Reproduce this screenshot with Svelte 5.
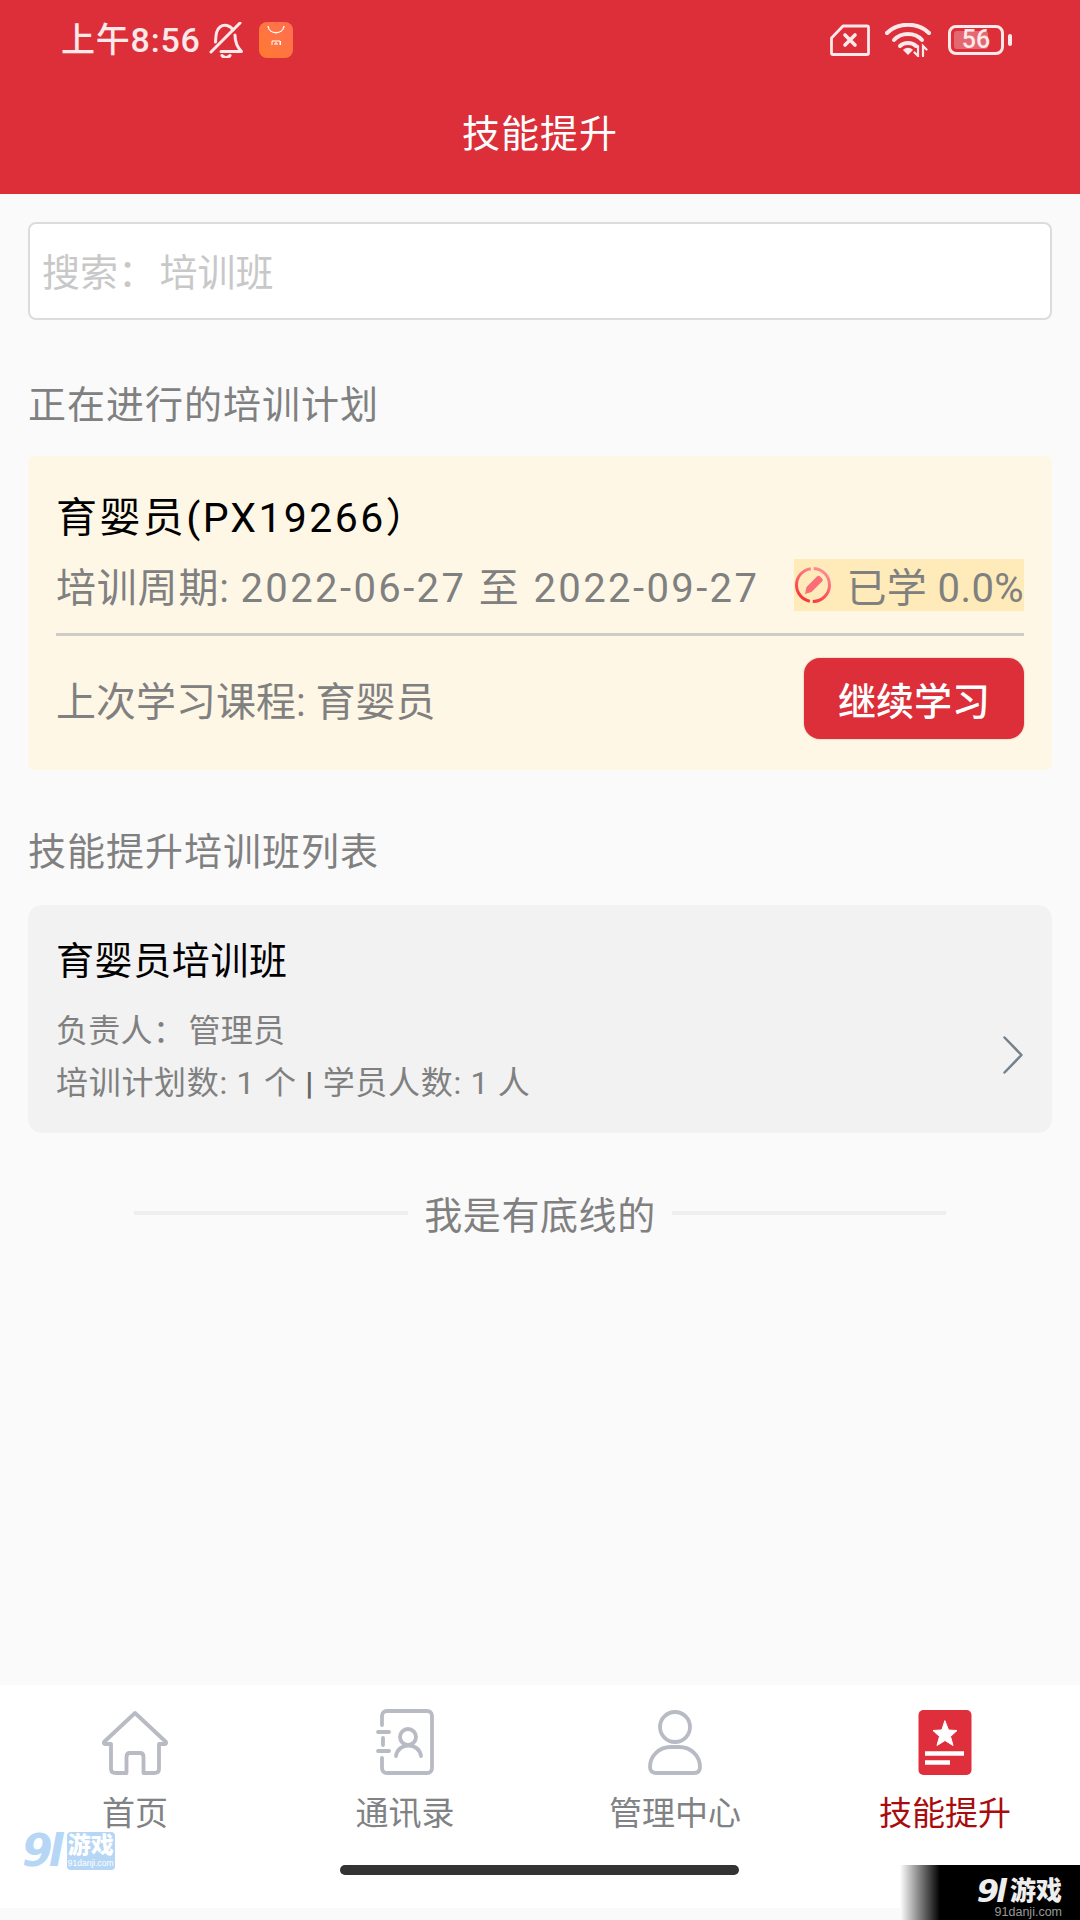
<script lang="ts">
  const tabs = [
    { label: '首页', icon: 'home' },
    { label: '通讯录', icon: 'book' },
    { label: '管理中心', icon: 'user' },
    { label: '技能提升', icon: 'skill', active: true },
  ];
</script>

<div class="page">
  <header class="header">
    <div class="status">
      <div class="status-left">
        <span class="clock">上午8:56</span>
        <svg class="bell" viewBox="0 0 36 36" fill="none" stroke="#fde8ea" stroke-width="3" stroke-linecap="round" stroke-linejoin="round">
          <path d="M3 30 L32 1" />
          <path d="M25 8 C22 3 16 2 12 5 C8 8 8 13 7.500 20" />
          <path d="M27 13 C27 19 29 25 33.500 29.500 L13 29.500" />
          <path d="M14 33.500 C16 36 20 36 22 33.500" />
        </svg>
        <svg class="mi" viewBox="0 0 34 36">
          <defs>
            <linearGradient id="mi-grad" x1="0" y1="1" x2="1" y2="0">
              <stop offset="0" stop-color="#ff7a30" />
              <stop offset="1" stop-color="#ff6f52" />
            </linearGradient>
          </defs>
          <rect width="34" height="36" rx="8" fill="url(#mi-grad)" />
          <path d="M9 4 C10 13 24 13 25 4" fill="none" stroke="#fff" stroke-width="1.400" />
          <path d="M13 23 V19 H21 V23 M16 23 V21 H18 V23 M21.500 19 V23" fill="none" stroke="#fff" stroke-width="1" />
        </svg>
      </div>
      <div class="status-right">
        <svg class="sim" viewBox="0 0 40 32" fill="none" stroke="#fde8ea" stroke-width="2.800" stroke-linejoin="round" stroke-linecap="round">
          <path d="M13 2 H37 A1.500 1.500 0 0 1 38.500 3.500 V29 A1.500 1.500 0 0 1 37 30.500 H3 A1.500 1.500 0 0 1 1.500 29 V14 Z" />
          <path d="M15 11 L25 21 M25 11 L15 21" stroke-width="3.600" />
        </svg>
        <svg class="wifi" viewBox="0 0 46 34" fill="none" stroke="#fde8ea" stroke-linecap="round">
          <path d="M2 10 C13 -1 33 -1 44 10" stroke-width="4" />
          <path d="M9 17 C16 9 30 9 37 17" stroke-width="4" />
          <path d="M15 23 C19 19 27 19 31 23" stroke-width="4" />
          <path d="M18 27 L23 32 L28 27 C25 24 21 24 18 27 Z" fill="#fde8ea" stroke="none" />
          <path d="M33 23 V33 L29.500 29.500 M38 33 V23 L41.500 26.500" stroke-width="2.200" />
        </svg>
        <div class="battery">
          <div class="battery-body">
            <span class="battery-fill"></span>
            <span class="battery-num">56</span>
          </div>
          <span class="battery-tip"></span>
        </div>
      </div>
    </div>
    <h1 class="title">技能提升</h1>
  </header>

  <main class="main">
    <div class="search">搜索： 培训班</div>

    <h2 class="section section-plan">正在进行的培训计划</h2>
    <section class="plan">
      <div class="plan-name">育婴员(PX19266）</div>
      <div class="plan-row">
        <span class="period"><span class="period-label">培训周期:{' '}</span>2022-06-27 至 2022-09-27</span>
        <span class="learned">
          <svg class="pen" viewBox="0 0 38 38" fill="none">
            <defs>
              <linearGradient id="pen-grad" x1="0.800" y1="0" x2="0.300" y2="1">
                <stop offset="0" stop-color="#ff8f9c" />
                <stop offset="1" stop-color="#f8333c" />
              </linearGradient>
            </defs>
            <circle cx="19" cy="19" r="16.500" stroke="url(#pen-grad)" stroke-width="3" stroke-dasharray="26 3 46 3" />
            <path d="M11 28 L12.500 21 L23 10.500 C24 9.500 25 9.500 26 10.500 L28 12.500 C29 13.500 29 14.500 28 15.500 L17.500 26 Z" fill="#fb6d78" />
          </svg>
          <span>已学 0.0%</span>
        </span>
      </div>
      <div class="plan-foot">
        <span>上次学习课程: 育婴员</span>
        <button class="continue" type="button">继续学习</button>
      </div>
    </section>

    <h2 class="section">技能提升培训班列表</h2>
    <section class="course">
      <div class="course-text">
        <div class="course-name">育婴员培训班</div>
        <div class="course-line first">负责人： 管理员</div>
        <div class="course-line stats">培训计划数: 1 个 <b>|</b> 学员人数: 1 人</div>
      </div>
      <svg class="chevron" viewBox="0 0 22 38" fill="none" stroke="#74828c" stroke-width="2.500" stroke-linecap="round" stroke-linejoin="round">
        <path d="M2.500 1.500 L19.500 19 L2.500 36.500" />
      </svg>
    </section>

    <div class="bottom-line">
      <span class="rule"></span>
      <span>我是有底线的</span>
      <span class="rule"></span>
    </div>
  </main>

  <nav class="tabbar">
    {#each tabs as tab (tab.label)}
      <div class="tab" class:active={tab.active}>
        <svg class="tab-icon" viewBox="0 0 68 68" fill="none" stroke="#b8bac4" stroke-width="3.800" stroke-linecap="round" stroke-linejoin="round">
          {#if tab.icon === 'home'}
            <path d="M34 4 L65 33 C65.500 34 65 35 64 35 H58 V60 C58 63 56 64 53 64 H42.500 V48 C42.500 45 41 44 39 44 H29 C27 44 25.500 45 25.500 48 V64 H15 C12 64 10 63 10 60 V35 H4 C3 35 2.500 34 3 33 Z" />
          {:else if tab.icon === 'book'}
            <path d="M11 16 V7 C11 4 13 2 16 2 H56 C59 2 61 4 61 7 V59 C61 62 59 64 56 64 H16 C13 64 11 62 11 59 V49" />
            <path d="M7 23 H18 M7 42 H18 M12 29 V36" />
            <circle cx="37" cy="28" r="8" />
            <path d="M25 47 C27 33 48 33 50 47" />
          {:else if tab.icon === 'user'}
            <circle cx="34" cy="18" r="15" />
            <path d="M9 58 C9 47 18 38 30 38 H38 C50 38 59 47 59 58 C59 62 57 64 53 64 H15 C11 64 9 62 9 58 Z" />
          {:else}
            <rect x="7.500" y="1" width="53" height="65" rx="5" fill="#e02f3c" stroke="none" />
            <path d="M34 12 L37.500 21 L46 21.500 L39.500 27.500 L42 36.500 L34 31.500 L26 36.500 L28.500 27.500 L22 21.500 L30.500 21 Z" fill="#fff" stroke="#fff" stroke-width="1" />
            <path d="M14 44.500 H53 M14 53.500 H39" stroke="#fff" stroke-width="4.500" stroke-linecap="butt" />
          {/if}
        </svg>
        <span>{tab.label}</span>
      </div>
    {/each}
  </nav>

  <div class="home-bar"></div>

  <div class="mark-left">
    <b class="mark-num">9l</b>
    <div class="mark-text">
      <b>游戏</b>
      <small>91danji.com</small>
    </div>
  </div>

  <div class="mark-right">
    <div class="mark-row">
      <b class="mark-num">9l</b>
      <b class="mark-name">游戏</b>
    </div>
    <small>91danji.com</small>
  </div>
</div>

<style>
  :global(body) {
    margin: 0;
  }

  .page {
    position: relative;
    width: 1080px;
    height: 1920px;
    display: flex;
    flex-direction: column;
    overflow: hidden;
    background: #fafafa;
    font-family: Roboto, "Noto Sans CJK SC", sans-serif;
    color: #808080;
  }

  .header {
    height: 194px;
    flex: none;
    background: #dc2f39;
    color: #fff;
  }

  .status {
    height: 80px;
    padding: 0 68px 0 61px;
    display: flex;
    align-items: center;
    justify-content: space-between;
    color: #fde8ea;
  }

  .status-left,
  .status-right {
    display: flex;
    align-items: center;
  }

  .clock {
    font-size: 34px;
    line-height: 80px;
    letter-spacing: 0.8px;
    font-weight: 500;
  }

  .bell {
    width: 36px;
    height: 36px;
    margin-left: 7px;
  }

  .mi {
    width: 34px;
    height: 36px;
    margin-left: 15px;
  }

  .sim {
    width: 40px;
    height: 32px;
  }

  .wifi {
    width: 46px;
    height: 34px;
    margin-left: 15px;
  }

  .battery {
    display: flex;
    align-items: center;
    margin-left: 17px;
  }

  .battery-body {
    position: relative;
    width: 50px;
    height: 24px;
    border: 3px solid #fde8ea;
    border-radius: 8px;
    display: flex;
    align-items: center;
    justify-content: center;
  }

  .battery-fill {
    position: absolute;
    left: 3px;
    top: 3px;
    bottom: 3px;
    width: 34px;
    border-radius: 3px;
    background: rgba(255, 255, 255, 0.28);
  }

  .battery-num {
    position: relative;
    font-size: 25px;
    line-height: 24px;
    font-weight: 500;
  }

  .battery-tip {
    width: 4px;
    height: 12px;
    margin-left: 4px;
    border-radius: 2px;
    background: #fde8ea;
  }

  .title {
    margin: 0;
    text-align: center;
    font-size: 38px;
    line-height: 108px;
    height: 108px;
    font-weight: 400;
    letter-spacing: 1px;
  }

  .main {
    flex: 1;
    padding: 28px 28px 0;
    min-height: 0;
  }

  .search {
    height: 98px;
    box-sizing: border-box;
    border: 2px solid #dcdcdc;
    border-radius: 8px;
    background: #fff;
    padding-left: 12px;
    font-size: 38px;
    line-height: 98px;
    word-spacing: -6px;
    color: #c8c8c8;
  }

  .section {
    margin: 0;
    padding-top: 57px;
    font-size: 38px;
    line-height: 50px;
    font-weight: 400;
    letter-spacing: 1px;
    color: #808080;
  }

  .section-plan {
    padding-top: 60px;
  }

  .plan {
    margin-top: 26px;
    height: 314px;
    box-sizing: border-box;
    padding: 0 28px;
    background: #fff7e6;
    border-radius: 6px;
  }

  .plan-name {
    padding-top: 34px;
    font-size: 41px;
    line-height: 56px;
    letter-spacing: 2.400px;
    color: #000;
  }

  .plan-row {
    display: flex;
    justify-content: space-between;
    align-items: center;
    margin-top: 13px;
    height: 52px;
    padding-bottom: 22px;
    border-bottom: 3px solid #cfcdc8;
    font-size: 40px;
    white-space: nowrap;
  }

  .period {
    letter-spacing: 2.400px;
  }

  .period-label {
    letter-spacing: 0.8px;
  }

  .learned {
    display: flex;
    align-items: center;
    height: 52px;
    background: #feebb9;
    gap: 14px;
    letter-spacing: 0.4px;
  }

  .pen {
    width: 38px;
    height: 38px;
  }

  .plan-foot {
    display: flex;
    justify-content: space-between;
    align-items: center;
    height: 134px;
    font-size: 40px;
    padding-bottom: 9px;
    box-sizing: border-box;
  }

  .continue {
    width: 220px;
    height: 81px;
    border: 0;
    border-radius: 16px;
    background: #dc2f39;
    color: #fff;
    font: 500 38px Roboto, "Noto Sans CJK SC", sans-serif;
    box-shadow: 0 0 2px rgba(120, 60, 40, 0.4);
  }

  .course {
    margin-top: 28px;
    height: 228px;
    box-sizing: border-box;
    padding: 0 28px;
    display: flex;
    justify-content: space-between;
    align-items: center;
    background: #f2f2f2;
    border-radius: 14px;
  }

  .course-name {
    font-size: 38px;
    line-height: 52px;
    letter-spacing: 0.6px;
    color: #000;
    padding-top: 6px;
  }

  .course-line {
    font-size: 32px;
    line-height: 52px;
    letter-spacing: 0.3px;
    word-spacing: -5px;
    color: #808080;
  }

  .course-line.first {
    margin-top: 18px;
  }

  .course-line.stats {
    letter-spacing: 0.7px;
    word-spacing: 0;
  }

  .course-line b {
    color: #666;
  }

  .chevron {
    width: 22px;
    height: 38px;
    margin-top: 72px;
  }

  .bottom-line {
    margin-top: 53px;
    display: flex;
    align-items: center;
    justify-content: center;
    gap: 16px;
    font-size: 38px;
    line-height: 60px;
    letter-spacing: 0.6px;
  }

  .rule {
    width: 274px;
    height: 4px;
    margin-bottom: 6px;
    background: #eeeeee;
  }

  .tabbar {
    flex: none;
    height: 223px;
    margin-bottom: 12px;
    background: #fff;
    display: grid;
    grid-template-columns: repeat(4, 270px);
  }

  .tab {
    display: flex;
    flex-direction: column;
    align-items: center;
    padding-top: 24px;
    font-size: 33px;
    line-height: 44px;
    color: #808285;
  }

  .tab.active {
    color: #a80c0c;
  }

  .tab-icon {
    width: 68px;
    height: 68px;
    margin-bottom: 15px;
  }

  .home-bar {
    position: absolute;
    left: 340px;
    top: 1865px;
    width: 399px;
    height: 10px;
    border-radius: 5px;
    background: #333;
  }

  .mark-left {
    position: absolute;
    left: 22px;
    top: 1832px;
    display: flex;
    align-items: center;
    color: #b5d6f5;
  }

  .mark-left .mark-num {
    font: italic 700 44px/36px "DejaVu Sans", sans-serif;
    letter-spacing: -4px;
    margin-right: 7px;
  }

  .mark-text {
    width: 48px;
    padding: 1px 0;
    border-radius: 4px;
    background: #b5d6f5;
    color: #fff;
    text-align: center;
  }

  .mark-text b {
    display: block;
    font-size: 23px;
    line-height: 25px;
    font-weight: 900;
  }

  .mark-text small {
    display: block;
    font: 8.500px/11px "Liberation Sans", sans-serif;
  }

  .mark-right {
    position: absolute;
    left: 900px;
    top: 1865px;
    width: 180px;
    height: 55px;
    box-sizing: border-box;
    padding: 12px 18px 0 0;
    display: flex;
    flex-direction: column;
    align-items: flex-end;
    background: linear-gradient(to right, #ffffff 0, #000000 40px);
    color: #eee;
  }

  .mark-row {
    display: flex;
    align-items: center;
    height: 29px;
  }

  .mark-right .mark-num {
    font: italic 700 32px/29px "DejaVu Sans", sans-serif;
    letter-spacing: -3px;
    margin-right: 6px;
  }

  .mark-name {
    font-size: 26px;
    line-height: 29px;
    font-weight: 900;
  }

  .mark-right small {
    font: 12.500px/13px "Liberation Sans", sans-serif;
    color: #999;
  }
</style>
